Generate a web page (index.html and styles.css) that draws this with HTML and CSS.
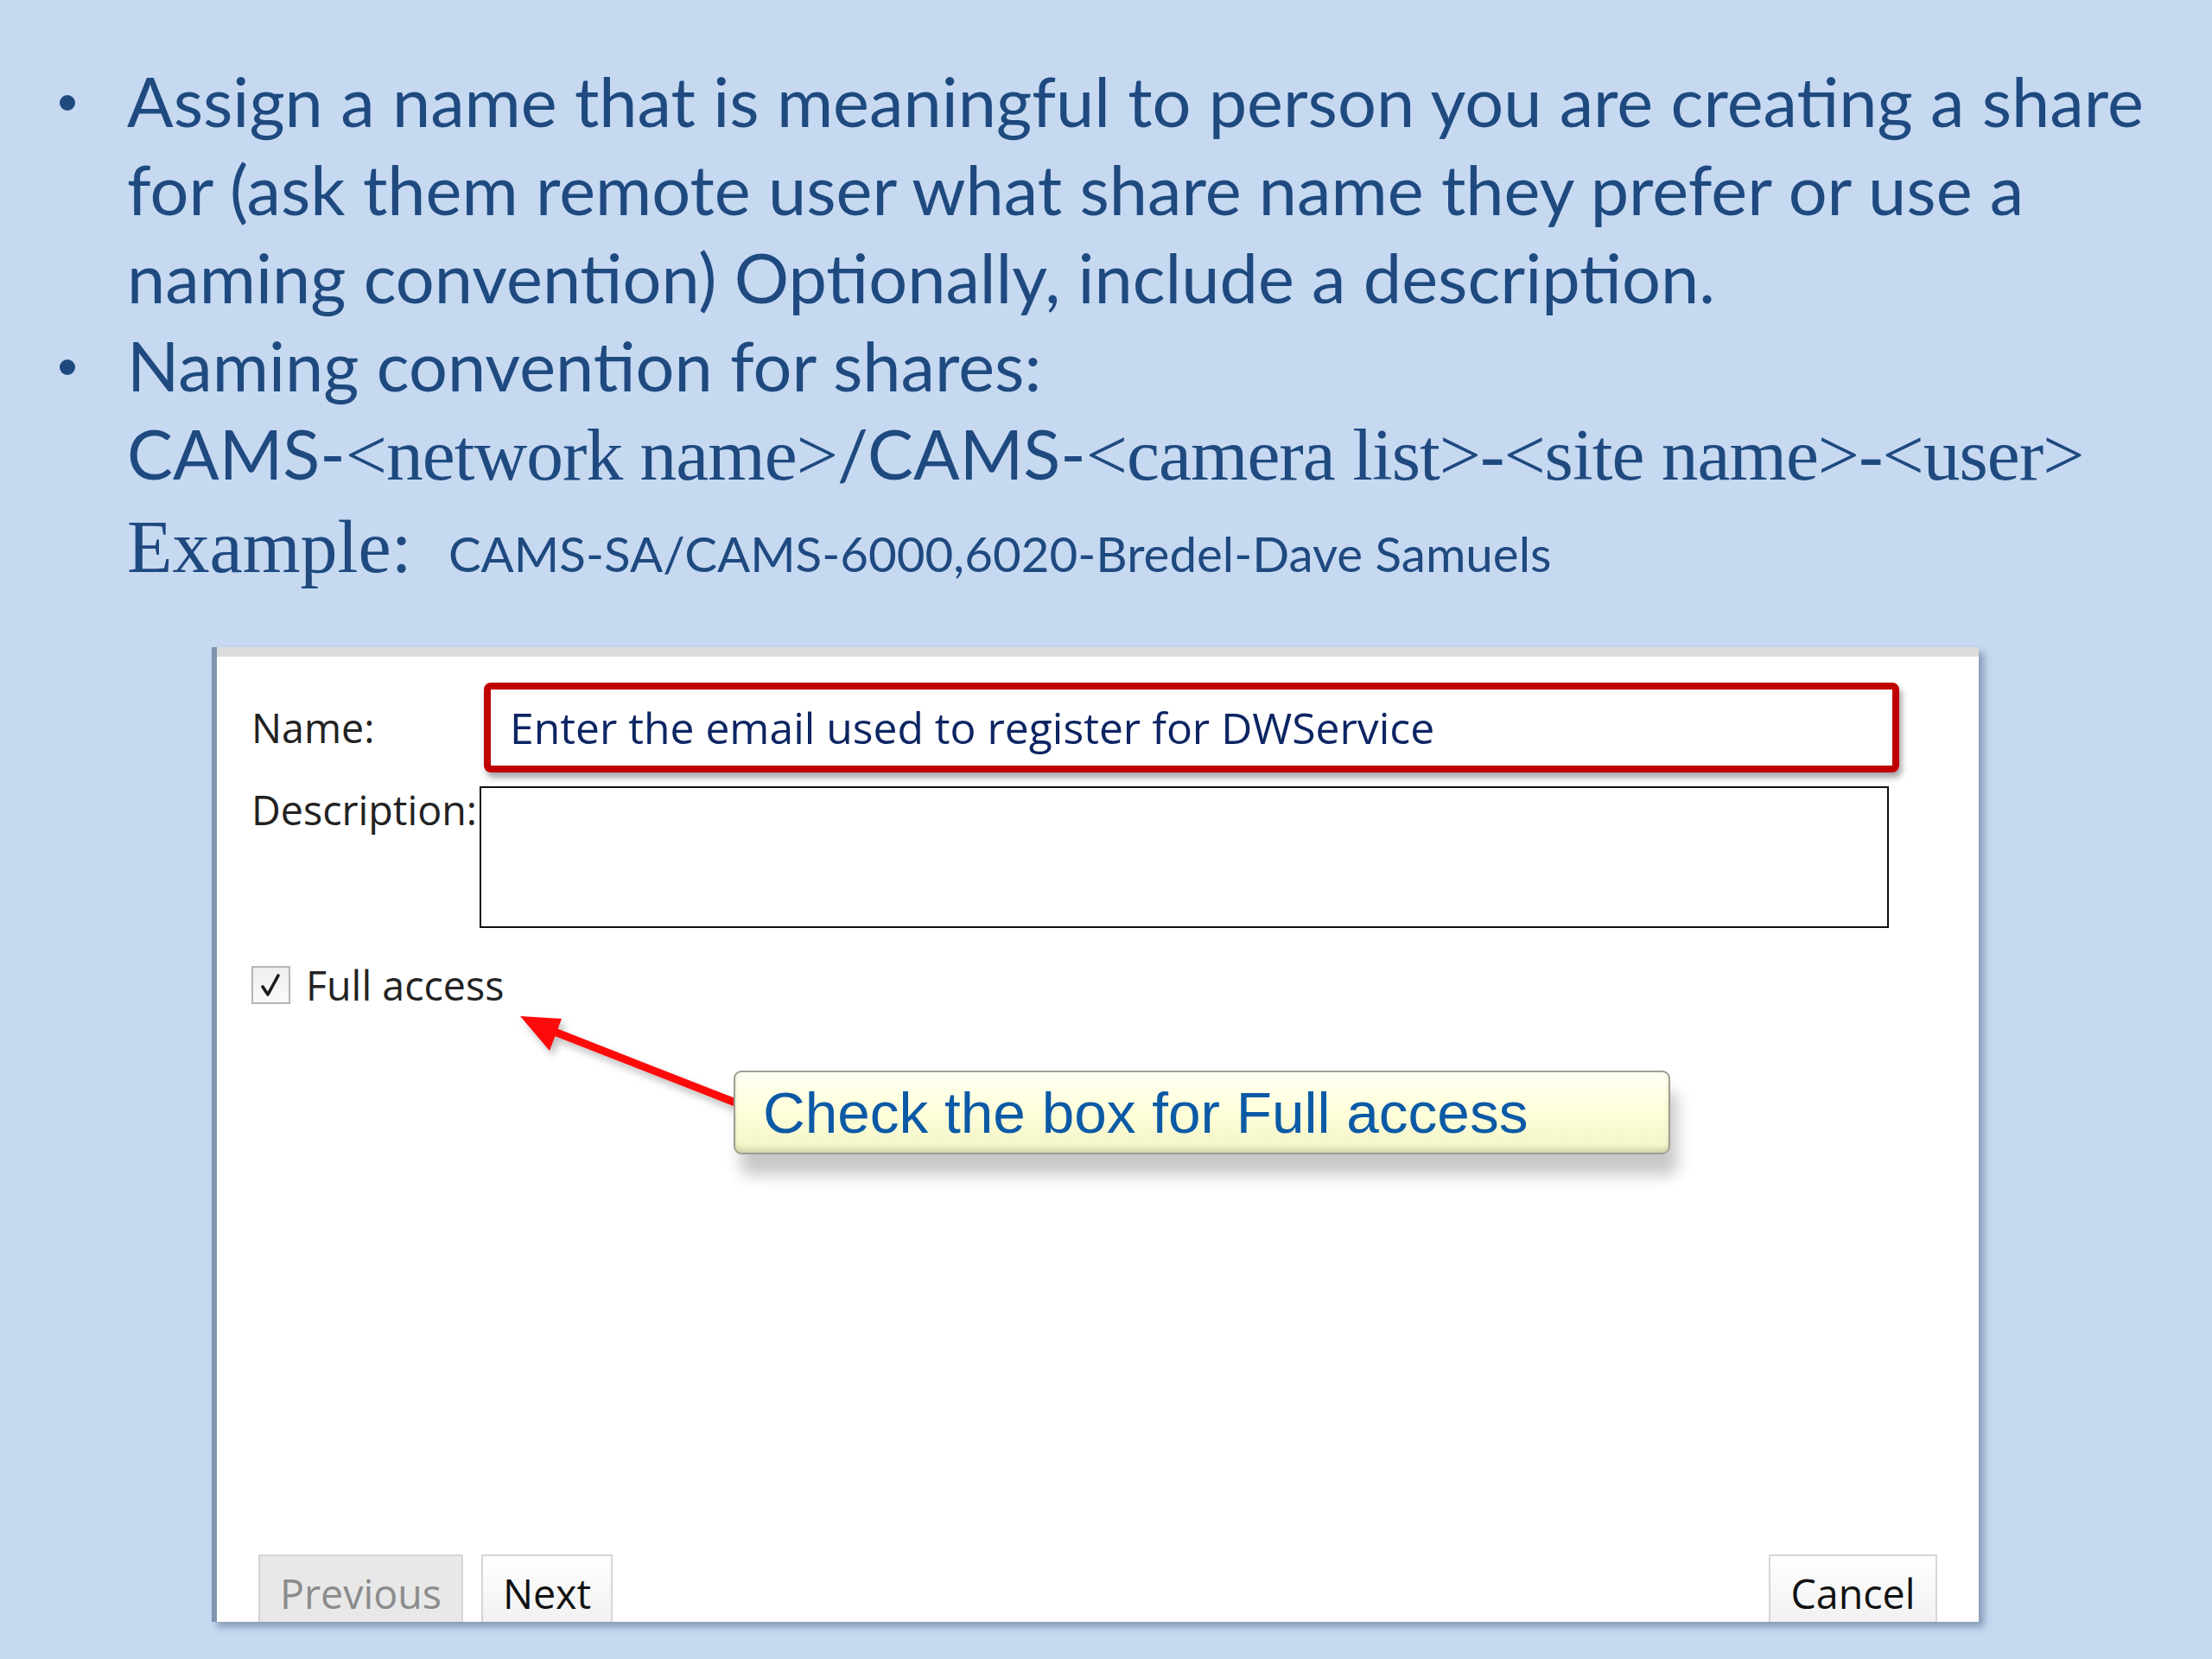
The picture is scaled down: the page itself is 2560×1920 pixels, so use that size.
FILE: index.html
```html
<!DOCTYPE html>
<html lang="en">
<head>
<meta charset="utf-8">
<title>Create share</title>
<link rel="stylesheet" href="styles.css">
</head>
<body>
<div class="slide">
  <ul class="points">
    <li class="item">
      <span class="dot"></span>
      <div class="lines">
        <div class="line">Assign a name that is meaningful to person you are creating a share</div>
        <div class="line">for (ask them remote user what share name they prefer or use a</div>
        <div class="line">naming convention) Optionally, include a description.</div>
      </div>
    </li>
    <li class="item">
      <span class="dot"></span>
      <div class="lines">
        <div class="line">Naming convention for shares:</div>
        <div class="line">CAMS-<span class="serif">&lt;network name&gt;</span>/CAMS-<span class="serif">&lt;camera list&gt;-&lt;site name&gt;-&lt;user&gt;</span></div>
        <div class="line ex-line"><span class="serif ex">Example:</span> <span class="small">CAMS-SA/CAMS-6000,6020-Bredel-Dave Samuels</span></div>
      </div>
    </li>
  </ul>

  <div class="dialog">
    <div class="strip"></div>
    <div class="form">
      <div class="row row-name">
        <span class="label label-name">Name:</span>
        <div class="name-box">Enter the email used to register for DWService</div>
      </div>
      <div class="row row-desc">
        <span class="label label-desc">Description:</span>
        <div class="desc-box"></div>
      </div>
      <div class="row row-check">
        <span class="check"><svg width="41" height="40" viewBox="0 0 41 40"><path d="M11 22 L17 31 L29 9" fill="none" stroke="#1a1a1a" stroke-width="3.6" stroke-linecap="round" stroke-linejoin="round"/></svg></span>
        <span class="check-label">Full access</span>
      </div>
    </div>
    <div class="buttons">
      <span class="btn btn-disabled btn-prev">Previous</span>
      <span class="btn btn-next">Next</span>
      <span class="spacer"></span>
      <span class="btn btn-cancel">Cancel</span>
    </div>

    <svg class="arrow" width="620" height="140" viewBox="0 0 620 140">
      <line x1="600" y1="127" x2="388" y2="44" stroke="#ff0a0a" stroke-width="9" />
      <polygon points="351,27 399,30 385,67" fill="#ff0a0a" />
    </svg>
    <div class="callout">Check the box for Full access</div>
  </div>
</div>
</body>
</html>
```

FILE: styles.css
```css
html, body {
  margin: 0;
  padding: 0;
}
body {
  width: 2560px;
  height: 1920px;
  overflow: hidden;
  background: #c6d9f1;
}
.slide {
  padding: 66px 0 0 0;
  color: #1f4a80;
  font-family: Lato, "Liberation Sans", sans-serif;
}
.points {
  list-style: none;
  margin: 0;
  padding: 0 0 0 69px;
}
.item {
  display: flex;
}
.dot {
  flex: none;
  width: 18px;
  height: 18px;
  border-radius: 50%;
  background: #1f4a80;
  margin: 44px 60px 0 0;
}
.lines {
  display: flex;
  flex-direction: column;
}
.line {
  font-size: 79.3px;
  line-height: 102px;
  height: 102px;
  white-space: nowrap;
}
.serif {
  font-family: "Liberation Serif", serif;
  font-size: 85.5px;
  letter-spacing: -1px;
}
.ex-line {
  margin-top: 5px;
}
.serif.ex {
  font-size: 86px;
  letter-spacing: 0;
  margin-right: 22px;
}
.small {
  font-size: 56.5px;
}

/* dialog */
.dialog {
  position: relative;
  margin: 66px 0 0 245px;
  width: 2039px;
  height: 1128px;
  background: #fff;
  border-left: 6px solid #8094ae;
  box-shadow: 6px 6px 8px rgba(60, 80, 110, 0.45);
  display: flex;
  flex-direction: column;
  font-family: "Open Sans", "Liberation Sans", sans-serif;
  color: #222;
}
.strip {
  height: 11px;
  background: #dcdcdc;
}
.form {
  padding: 30px 0 0 40px;
  display: flex;
  flex-direction: column;
}
.row {
  display: flex;
}
.label {
  font-size: 46.6px;
}
.row-name {
  align-items: center;
}
.label-name {
  width: 269px;
}
.name-box {
  box-sizing: border-box;
  width: 1638px;
  height: 104px;
  border: 8px solid #c00000;
  border-radius: 8px;
  box-shadow: 3px 6px 7px rgba(0, 0, 0, 0.35);
  padding-left: 22px;
  display: flex;
  align-items: center;
  font-size: 49.8px;
  color: #0d2563;
}
.row-desc {
  margin-top: 16px;
}
.label-desc {
  width: 264px;
  line-height: 46px;
  margin-top: 4px;
}
.desc-box {
  box-sizing: border-box;
  width: 1631px;
  height: 164px;
  border: 2px solid #111;
}
.row-check {
  margin-top: 34px;
  align-items: center;
}
.check {
  box-sizing: border-box;
  width: 45px;
  height: 44px;
  border: 2px solid #b5b5b5;
  background: linear-gradient(#eeeeee, #fafafa);
  display: flex;
}
.check-label {
  font-size: 46.6px;
  margin-left: 18px;
}

.buttons {
  margin-top: auto;
  display: flex;
  align-items: flex-end;
  padding: 0 48px 0 48px;
  gap: 21px;
}
.spacer {
  flex: 1;
}
.btn {
  box-sizing: border-box;
  height: 78px;
  padding-top: 12px;
  border: 2px solid #d6d6d6;
  border-bottom: none;
  background: linear-gradient(#ffffff, #f1f1f1);
  font-size: 46.6px;
  line-height: 62px;
  text-align: center;
  color: #111;
}
.btn-prev {
  width: 237px;
  background: #e8e8e8;
  color: #8c8c8c;
}
.btn-next {
  width: 152px;
}
.btn-cancel {
  width: 195px;
}

/* annotations */
.arrow {
  position: absolute;
  left: 0;
  top: 400px;
  overflow: visible;
  filter: drop-shadow(4px 6px 4px rgba(0, 0, 0, 0.25));
}
.callout {
  position: absolute;
  left: 598px;
  top: 490px;
  box-sizing: border-box;
  width: 1084px;
  height: 97px;
  border: 2px solid #9d9d92;
  border-radius: 9px;
  background: linear-gradient(#fffff2 0%, #ffffdc 45%, #f3f3c6 100%);
  box-shadow: inset 0 -5px 5px rgba(0, 0, 0, 0.12), 8px 24px 18px rgba(0, 0, 0, 0.22);
  padding: 4px 0 0 32px;
  font-family: "Liberation Sans", Arial, sans-serif;
  font-size: 67.5px;
  line-height: 86px;
  color: #0c5aa6;
  white-space: nowrap;
}
```
